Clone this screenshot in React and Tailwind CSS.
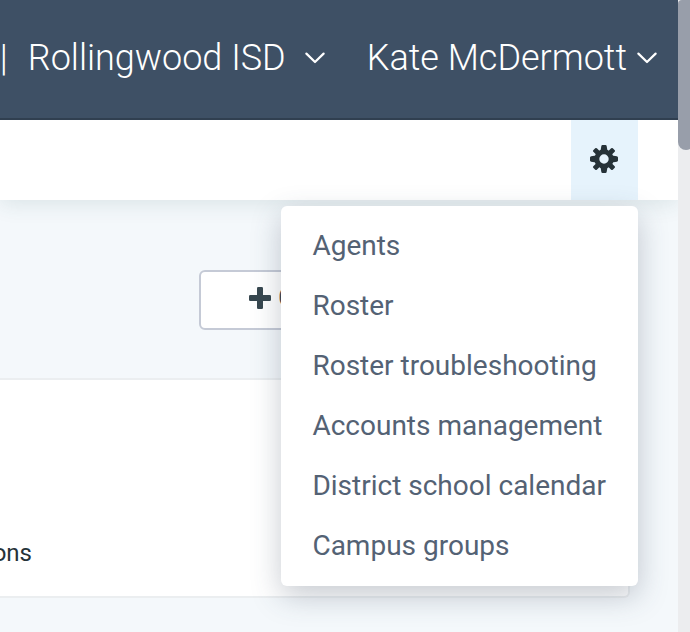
import React from "react";

const menuItems = [
  "Agents",
  "Roster",
  "Roster troubleshooting",
  "Accounts management",
  "District school calendar",
  "Campus groups",
];

function Chevron() {
  return (
    <svg className="h-3 w-5 shrink-0" viewBox="0 0 20 12" fill="none" stroke="currentColor" strokeWidth="2.2" strokeLinecap="round" strokeLinejoin="round" aria-hidden="true">
      <path d="M1.4 1.6 10 10l8.6-8.4" />
    </svg>
  );
}

function Gear() {
  const tooth = "M-3.5 -8 L-2.7 -12.8 Q-2.5 -14 -1.5 -14 L1.5 -14 Q2.5 -14 2.7 -12.8 L3.5 -8 Z";
  const diagonal = "M-2.5 -8 L-2.5 -12.6 Q-2.4 -13.8 -1.4 -13.8 L1.4 -13.8 Q2.4 -13.8 2.5 -12.6 L2.5 -8 Z";
  return (
    <svg className="h-7 w-7" viewBox="-14 -14 28 28" fill="currentColor" aria-hidden="true">
      {[0, 90, 180, 270].map((a) => (
        <path key={a} d={tooth} transform={`rotate(${a})`} />
      ))}
      {[45, 135, 225, 315].map((a) => (
        <path key={a} d={diagonal} transform={`rotate(${a})`} />
      ))}
      <circle r="7.2" fill="none" stroke="currentColor" strokeWidth="5" />
    </svg>
  );
}

function Plus() {
  return (
    <svg className="h-[22px] w-[22px] shrink-0" viewBox="0 0 22 22" fill="currentColor" aria-hidden="true">
      <rect x="8" y="0" width="6" height="22" rx="1.3" />
      <rect x="0" y="8" width="22" height="6" rx="1.3" />
    </svg>
  );
}

export default function App() {
  return (
    <div className="flex min-h-screen overflow-hidden bg-[#f4f8fb] font-['Roboto',sans-serif]">
      <div className="min-w-0 flex-1">
        <header className="relative z-20 flex h-[120px] items-center justify-end overflow-hidden border-b-2 border-[#303f50] bg-[#3e5065] pr-[21px] pb-0.5 text-4xl font-light whitespace-nowrap text-white">
          <span className="mr-5">|</span>
          <button type="button" className="mr-[42px] flex items-center gap-[19px]">
            Rollingwood ISD
            <Chevron />
          </button>
          <button type="button" className="flex items-center gap-[10px]">
            Kate McDermott
            <Chevron />
          </button>
        </header>

        <div className="relative flex h-20 justify-end bg-white pr-10 shadow-[0_4px_20px_rgba(40,90,90,0.12)]">
          <button type="button" aria-label="Settings" aria-expanded="true" className="flex w-[67px] items-center justify-center bg-[#e6f3fc] pr-0.5 pb-0.5 text-[#263238]">
            <Gear />
          </button>
          <nav className="absolute top-[86px] right-10 z-10 rounded-md bg-white py-[10px] shadow-[0_10px_30px_rgba(55,70,90,0.28)]">
            <ul>
              {menuItems.map((item) => (
                <li key={item}>
                  <a href="#" className="block pr-8 pl-[31px] text-[28px] leading-[60px] whitespace-nowrap text-[#546274]">
                    {item}
                  </a>
                </li>
              ))}
            </ul>
          </nav>
        </div>

        <main className="pt-[70px] pr-12">
          <div className="flex justify-end">
            <button type="button" aria-label="Create" className="flex h-[60px] w-[431px] items-center gap-[7px] rounded-md border-2 border-[#c5cad6] bg-white pb-1 pl-12 text-[28px] text-[#37474f]">
              <Plus />
              C
            </button>
          </div>
          <section className="mt-12 flex h-[220px] items-end rounded-r-md border-2 border-l-0 border-[#ebeef0] bg-white pb-[23px]">
            <div className="flex w-8 justify-end overflow-hidden text-2xl leading-10 text-[#263238]">
              ons
            </div>
          </section>
        </main>
      </div>

      <div className="relative z-20 w-3 shrink-0 overflow-hidden bg-[#ecedef]">
        <div className="h-[150px] w-4 rounded-tl-sm rounded-b-lg bg-[#989eaa]" />
      </div>
    </div>
  );
}
